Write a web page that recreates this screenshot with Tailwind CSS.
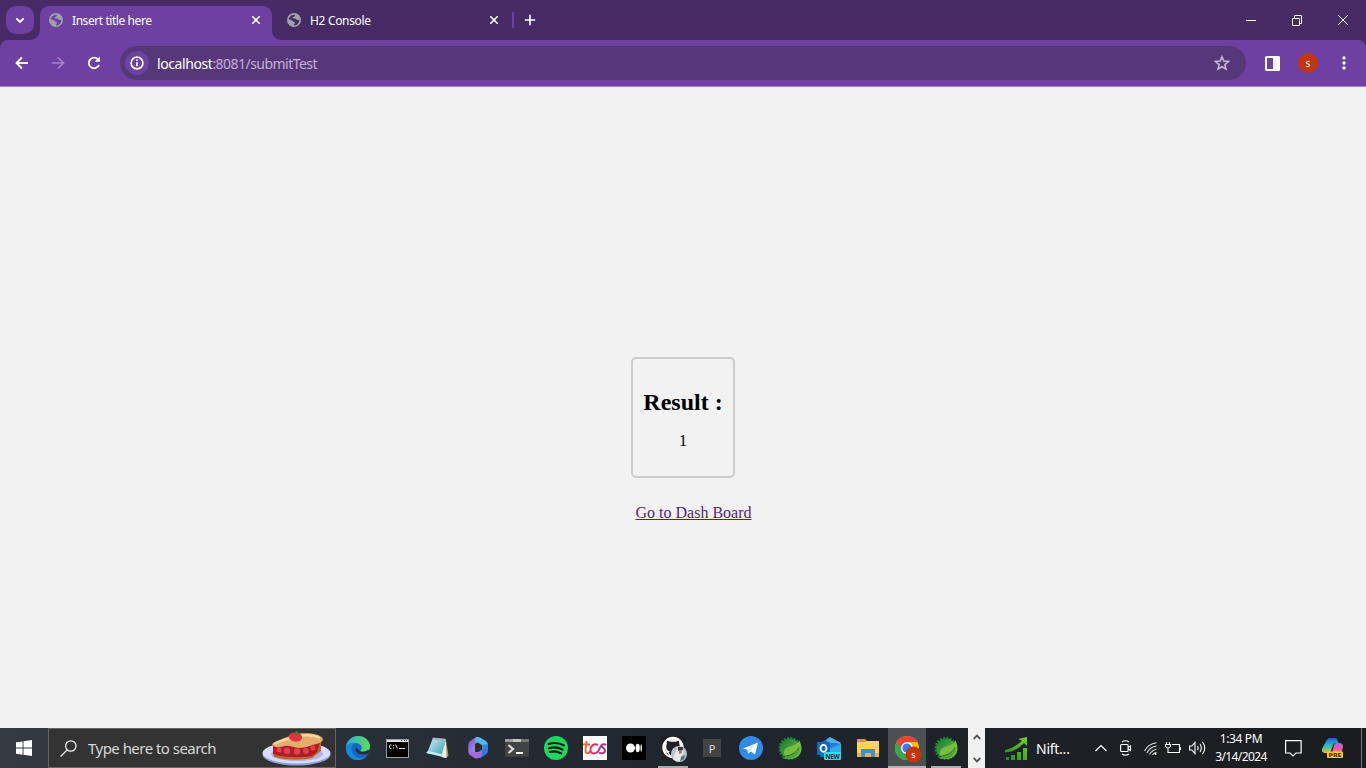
<!DOCTYPE html>
<html lang="en">
<head>
<meta charset="utf-8">
<title>Insert title here</title>
<script src="https://cdn.jsdelivr.net/npm/@tailwindcss/browser@4"></script>
</head>
<body class="w-[1366px] h-[768px] overflow-hidden flex flex-col bg-[#f2f2f2] font-['Noto_Sans','Open_Sans',sans-serif]">
<svg class="absolute w-0 h-0">
  <defs>
    <linearGradient id="leaf" x1="0" y1="0" x2="1" y2="1"><stop offset="0" stop-color="#137b35"/><stop offset="1" stop-color="#75bd3b"/></linearGradient>
    <linearGradient id="edge" x1="0" y1="0" x2="1" y2="0"><stop offset="0" stop-color="#2aabe0"/><stop offset="1" stop-color="#62dc58"/></linearGradient>
    <linearGradient id="note" x1="0" y1="0" x2="1" y2="1"><stop offset="0" stop-color="#d9f0f4"/><stop offset="1" stop-color="#2d9cb5"/></linearGradient>
    <linearGradient id="tcs" gradientUnits="userSpaceOnUse" x1="0" y1="0" x2="24" y2="0"><stop offset="0" stop-color="#ee8b22"/><stop offset=".4" stop-color="#e33060"/><stop offset="1" stop-color="#8a35bb"/></linearGradient>
    <linearGradient id="cp" x1="0" y1="0" x2="0" y2="1"><stop offset="0" stop-color="#1b62dd"/><stop offset=".5" stop-color="#28b9c7"/><stop offset="1" stop-color="#d5c923"/></linearGradient>
    <linearGradient id="cq" x1="0" y1="0" x2="0" y2="1"><stop offset="0" stop-color="#b65bea"/><stop offset=".5" stop-color="#ef5c9c"/><stop offset="1" stop-color="#f8985b"/></linearGradient>
    <linearGradient id="m1" x1="0" y1="0" x2="1" y2="1"><stop offset="0" stop-color="#7154c7"/><stop offset="1" stop-color="#cf9df0"/></linearGradient>
    <linearGradient id="m2" x1="0" y1="0" x2="1" y2="1"><stop offset="0" stop-color="#3f9be8"/><stop offset="1" stop-color="#2767cd"/></linearGradient>
    <linearGradient id="stock" gradientUnits="userSpaceOnUse" x1="0" y1="23" x2="23" y2="0"><stop offset="0" stop-color="#188d21"/><stop offset="1" stop-color="#7fd31d"/></linearGradient>
  </defs>
  <symbol id="globe" viewBox="0 0 14 14"><circle cx="7" cy="7" r="7" fill="#9ea3a8"/><path d="M8 1.700c-.3.900.2 1.400-.7 1.900-.8.500-1.600.3-1.600 1.200 0 .7.900.8 2.300.8 1.300.1 1.300 1.600 2.400 1.500.9-.1 1.200-.5 2-.4-.1 3-2.100 5.600-5.300 5.700-.4-.7.100-1.500.8-1.800.5-.4.200-1.600-.7-1.700-1.300-.1-1.400-1.500-2.500-1.700L1.600 6.100C2.100 3.600 4.800 1.600 8 1.700z" fill="currentColor"/></symbol>
  <symbol id="spring" viewBox="0 0 24 24"><circle cx="12" cy="12.500" r="10.300" fill="none" stroke="#15843a" stroke-width="2.500" stroke-dasharray="2 1.240"/><circle cx="12" cy="12.500" r="9.900" fill="url(#leaf)"/><path d="M21.500 4.500C24.500 11 24.500 19 17 22c-6 2.500-11-1-11-5C6 9 17 12 21.500 4.500z" fill="#76bd40"/><path d="M4 22C10 20 18 19 22 12c0 7-7 11.500-14 11" fill="#4fa53c"/><path d="M5 20.500c7-.5 13-3 16-9" fill="none" stroke="#1c5926" stroke-width=".9"/></symbol>
</svg>

<header class="h-10 bg-[#472a66] flex items-start text-white shrink-0">
  <button class="mt-1.5 ml-1.5 size-7 rounded-[10px] bg-[#6e40a2] flex items-center justify-center"><svg class="size-7" viewBox="0 0 28 28" fill="none" stroke="#fff" stroke-width="1.800"><path d="M10.300 12.300l3.700 3.700 3.700-3.700"/></svg></button>
  <div class="relative w-[254px] -ml-1 h-10 flex items-center pl-[19px]">
    <svg class="absolute inset-0" width="254" height="40"><path d="M0 40Q10 39 10 29V16Q10 6 20 6H232Q242 6 242 16V29Q242 40 253 40z" fill="#6e40a2"/></svg>
    <svg class="relative size-3.5 text-[#6e40a2]"><use href="#globe"/></svg>
    <span class="relative ml-[9px] pt-[2px] text-[12px] tracking-[-0.43px] w-[150px] whitespace-nowrap">Insert title here</span>
    <svg class="relative ml-[28px] size-3" viewBox="0 0 12 12" fill="none" stroke="#fff" stroke-width="1.600"><path d="M2.300 2.300l7.400 7.400M9.700 2.300l-7.400 7.400"/></svg>
  </div>
  <div class="w-[229px] h-10 flex items-center pl-[3px]">
    <svg class="size-3.5 text-[#472a66]"><use href="#globe"/></svg>
    <span class="ml-[9px] pt-[2px] text-[12px] tracking-[-0.33px] w-[150px] whitespace-nowrap">H2 Console</span>
    <svg class="ml-[28px] size-3" viewBox="0 0 12 12" fill="none" stroke="#fff" stroke-width="1.600"><path d="M2.300 2.300l7.400 7.400M9.700 2.300l-7.400 7.400"/></svg>
  </div>
  <div class="mt-3 w-0.5 h-4 bg-[#6e40a2] -ml-px"></div>
  <svg class="mt-3.5 ml-2.5 size-3" viewBox="0 0 12 12" stroke="#fff" stroke-width="1.600"><path d="M6 .8v10.400M.8 6h10.400"/></svg>
  <svg class="ml-auto mt-3.5 w-[104px] h-3 mr-[17px]" viewBox="0 0 104 12" fill="none" stroke="#fff"><path d="M1 6.500h10M47.500 4.500h7v7h-7zM49.500 4.500v-3h7v8h-2M93 1l10 10M103 1L93 11"/></svg>
</header>

<div class="h-[47px] bg-[#472a66] shrink-0">
  <nav class="h-[47px] bg-[#6e40a2] rounded-t-[8px] border-b border-[#a285c4] flex items-center text-white">
    <svg class="ml-[14px] w-4 h-4" viewBox="0 0 16 16" fill="none" stroke="#fff" stroke-width="1.900"><path d="M14 8H3M8 2.500L2.500 8 8 13.500"/></svg>
    <svg class="ml-5 w-4 h-4" viewBox="0 0 16 16" fill="none" stroke="#a583c7" stroke-width="1.700"><path d="M2 8h11M8 2.500L13.500 8 8 13.500"/></svg>
    <svg class="ml-5 w-4 h-4" viewBox="0 0 16 16" fill="none" stroke="#fff" stroke-width="1.900"><path d="M13 10A5.300 5.300 0 1 1 12 4.300L13.300 6"/><path d="M14 1.500v5.300H8.700z" fill="#fff" stroke="none"/></svg>
    <div class="ml-[18px] w-[1126px] h-[34px] rounded-full bg-[#56377a] flex items-center pl-[5px]">
      <span class="size-6 rounded-full bg-[#6e40a2] flex items-center justify-center"><svg class="size-4" viewBox="0 0 16 16" fill="none" stroke="#fff" stroke-width="1.700"><circle cx="8" cy="8" r="5.900"/><path d="M8 7.200v4M8 4.500v1.600"/></svg></span>
      <span class="ml-2 text-[14px] tracking-[-0.53px] text-[#c2afd6] whitespace-nowrap"><span class="text-white tracking-[-0.42px]">localhost</span>:8081/submitTest</span>
      <svg class="ml-auto mr-4 size-4" viewBox="0 0 16 16" fill="none" stroke="#c5b9cf" stroke-width="1.600"><path d="M8 1.800l1.800 4.300 4.700.4-3.600 3.100 1.100 4.600L8 11.800l-4 2.400 1.100-4.600L1.500 6.500l4.700-.4z"/></svg>
    </div>
    <svg class="ml-[19px] w-[15px] h-[15px]" viewBox="0 0 15 15"><path fill="#fff" fill-rule="evenodd" d="M1 0h13l1 1v13l-1 1H1l-1-1V1zM2 2v11h6V2z"/></svg>
    <span class="ml-[18px] size-5 rounded-full bg-[#c0360d] flex items-center justify-center text-[10px] leading-none pb-px">s</span>
    <svg class="ml-[24px] w-1 h-[14px]" viewBox="0 0 4 14" fill="#fff"><circle cx="2" cy="2" r="1.700"/><circle cx="2" cy="7" r="1.700"/><circle cx="2" cy="12" r="1.700"/></svg>
  </nav>
</div>

<main class="h-[641px] shrink-0 flex flex-col items-center pt-[270px] text-black font-['Liberation_Serif',serif]">
  <section class="w-[104px] h-[121px] border-2 border-[#ccc] rounded-[5px] text-center pt-[29px]">
    <h2 class="text-[24px] leading-[28px] font-bold whitespace-nowrap">Result :</h2>
    <p class="mt-[16px] text-[16px] leading-[18px]">1</p>
  </section>
  <a class="mt-[26px] ml-[21px] text-[16px] leading-[18px] text-[#551a8b] underline" href="#">Go to Dash Board</a>
</main>

<footer class="h-10 shrink-0 bg-linear-to-r from-[#333a42] via-[#20262e] to-[#1b1c20] flex items-center text-white">
  <div class="w-12 flex justify-center"><svg class="size-4" viewBox="0 0 16 16" fill="#fff"><path d="M0 2.300L6.600 1.400v6.200H0zM7.500 1.200L16 0v7.600H7.500zM0 8.500h6.600v6.200L0 13.800zM7.500 8.500H16V16l-8.500-1.200z"/></svg></div>
  <div class="w-[288px] h-10 bg-[#333] border border-[#66625f] flex items-center pl-[11px]">
    <svg class="size-[17px]" viewBox="0 0 17 17" fill="none" stroke="#eee" stroke-width="1.300"><circle cx="10.800" cy="6" r="5.200"/><path d="M7.200 9.900L.6 16.500"/></svg>
    <span class="ml-[11px] text-[15px] tracking-[-0.53px] text-[#d8d8d8] whitespace-nowrap">Type here to search</span>
    <svg class="ml-auto mr-1 w-[69px] h-[36px]" viewBox="0 0 69 36"><ellipse cx="34.500" cy="24.500" rx="34" ry="11" fill="#8f9cd8"/><ellipse cx="34.500" cy="23" rx="34" ry="10.500" fill="#d8dcfa"/><ellipse cx="35" cy="24" rx="26" ry="7" fill="#acb4e9"/><path d="M11 22l1 5c14 4 30 3 38 1l9-7V10l-6 6z" fill="#b56a2c"/><path d="M11 15v9c11 3.500 28 4 39 2l5-4 3-10z" fill="#b31a28"/><g fill="#e2404a"><circle cx="17" cy="20" r="2.500"/><circle cx="25" cy="21" r="3.200"/><circle cx="35" cy="21.500" r="3.200"/><circle cx="44" cy="21" r="3"/><circle cx="51" cy="18" r="2.500"/></g><path d="M10 14C18 9 26 7 32 4.500 42 2 57 3 60.500 8c1.500 3-2 5-6 6-6 1-10 4-17 4-6 0-10-3-15-2-4 1-11 3-12.500-2z" fill="#e5ad6b"/><path d="M12 14C20 9.500 29 8.500 36 6.500 44 4.500 52 5 58 8" stroke="#f8d6a0" stroke-width="2.500" fill="none"/><path d="M27 5c3-4 11-3 13 1 1 4-3 6-7 5.500S26 9 27 5z" fill="#e0323f"/><path d="M29 2l4 1 2-3 1 3 4-1-4 2.500z" fill="#39842c"/></svg>
  </div>
  <div class="flex h-10 pl-[2.5px] w-[632px]">
    <div class="w-[39px] shrink-0 flex items-center justify-center"><svg class="size-6" viewBox="0 0 24 24"><circle cx="12" cy="12" r="12" fill="#1268bd"/><path d="M0 11C1 4 6 0 12 0c7 0 12 5 12 10 0 4-3 6-7 6-3 0-3-1-2-2 2-3-1-7-5-7C5 7 1 9 0 11z" fill="url(#edge)"/><path d="M0 12c1-4 5-6 9-5-4 2-4 6-3 9 2 5 7 8 14 5-4 4-11 4-15 1-4-3-5-6-5-10z" fill="#168bdc"/><path d="M10 11c-2 4 2 9 12 7l2-3-2-1c-5 3-9 2-12-3z" fill="#252d35"/></svg></div>
    <div class="w-[39px] shrink-0 flex items-center justify-center"><svg class="w-[23px] h-[19px]" viewBox="0 0 23 19"><path d="M0 0h23v19H0z" fill="#9b9fa2"/><path d="M1 1h21v2H1z" fill="#dce1e4"/><path d="M1 3h21v15H1z" fill="#000"/><path d="M15 1.500h1m2 0h1m1 0h1" stroke="#345"/><path d="M5.500 6H4L3.500 7v1.500l.5 1h1.500M7.500 6v1m0 1.500v1M9.500 5.500l2 4M13 9.500h6" stroke="#ddd" fill="none"/></svg></div>
    <div class="w-[39px] ml-px shrink-0 flex items-center justify-center"><svg class="size-6" viewBox="0 0 24 24"><path d="M21 4l2.500 16-3 2-3-1z" fill="#c59a42"/><path d="M8 2l13 1-4 17-15-3z" fill="url(#note)"/><path d="M1 17l15 3.500 1-2.500L3 15z" fill="#c3edf1"/><path d="M8 1.500L21 3l-.6 2L7.300 3.500z" fill="#a8b7bd"/><path d="M20.800 4L16 21l5.500 1z" fill="#e3eff0"/></svg></div>
    <div class="w-[39px] ml-[2px] shrink-0 flex items-center justify-center"><svg class="size-[22px]" viewBox="0 0 22 22"><path d="M9 0l4 4-5 3v8l-5 3c-2-3-2-6-1.500-11.500Q2 4.500 4 3.500z" fill="url(#m1)"/><path d="M9 .2Q11-.5 13 .5l6 3.500q2 1.500 2 4v6l-6-1.500V8L9 4.500Q7 3 9 .2z" fill="#54b8ed"/><path d="M15 8l6-1v7q0 2-2 3.500l-6 4-5-4 7-5z" fill="url(#m2)"/><path d="M1.500 14.500L8 15h4l3-2v4.500q-1 3-5 4-2 0-4-1.500l-3-2Q1.500 17 1.500 14.500z" fill="#a56bdb"/></svg></div>
    <div class="w-[39px] shrink-0 flex items-center justify-center"><svg class="w-6 h-[18px]" viewBox="0 0 24 18"><rect width="24" height="18" rx="1" fill="#404244"/><path d="M0 0h8v3H0z" fill="#9b9c9e"/><path d="M8 0h8v3H8z" fill="#c4c4c5"/><path d="M16 0h8v3h-8z" fill="#747678"/><path d="M3.500 6l4.500 4-4.500 4" stroke="#ddd" stroke-width="2.200" fill="none"/><path d="M11 14h7" stroke="#fff" stroke-width="2"/></svg></div>
    <div class="w-[39px] shrink-0 flex items-center justify-center"><svg class="size-6" viewBox="0 0 24 24"><circle cx="12" cy="12" r="12" fill="#1ed760"/><path d="M4.500 8c5-1.500 11-1 15.500 1.500M5 12.200c4-1.300 9.500-.8 13.500 1.500M5.700 16c3.500-1 8-.5 11.500 1.400" fill="none" stroke="#06150b" stroke-width="2.100" stroke-linecap="round"/></svg></div>
    <div class="w-[39px] shrink-0 flex items-center justify-center"><svg class="size-6" viewBox="0 0 24 24"><path d="M0 0h24v24H0z" fill="#fff"/><path d="M3.500 5l-1 9c0 4 3 4 5 1M0 8.500h7M15 9c-3-2-7 0-7.500 4s3 6 7 3c2-1.500 2-6 5-7.500 1.500-.5 3 0 3.500.5M18.500 9.500c0 2 4 2.500 3.500 5.500-.5 2.500-4 3-6 1.500" fill="none" stroke="url(#tcs)" stroke-width="2"/></svg></div>
    <div class="w-[39px] shrink-0 flex items-center justify-center"><svg class="size-6" viewBox="0 0 24 24" fill="#fff"><path fill="#000" d="M0 0h24v24H0z"/><circle cx="8.500" cy="12" r="4.500"/><ellipse cx="15.700" cy="12" rx="2.100" ry="4.200"/><ellipse cx="19.200" cy="12" rx=".7" ry="3.800"/></svg></div>
    <div class="relative w-[39px] shrink-0 flex items-center justify-center"><svg class="size-6 overflow-visible" viewBox="0 0 24 24"><path fill="#211f24" d="M0 0h24v24H0z"/><circle cx="12" cy="11.500" r="9.700" fill="none" stroke="#fff" stroke-width="2"/><path d="M5.500 16q2 .5 2.800 2.500T11 19.500" fill="none" stroke="#fff" stroke-width="1.200"/><path d="M12 1.500a10 10 0 0 1 10 10 10 10 0 0 1-2 6l-5-1.500c3.500-1 4.500-4 3.300-8L18 4.500l-3.200 1.300H9.200L6 4.500 5.700 8c-1.200 4 0 6.500 3.300 7.500L7 17l-3-1a10 10 0 0 1 8-14.500z" fill="#fff"/><circle cx="18" cy="18" r="8" fill="#b0c5d2"/><path d="M14 17l3-5 5 1 1 4-3 3 2 5c-3 1-7 1-10-2z" fill="#ece7e5"/><path d="M17 11h5v3l-5 1z" fill="#303747"/><path d="M18 14h3v3l-3 1z" fill="#b5765b"/><path d="M20 21l4-2-1 4-4 3z" fill="#4b718a"/></svg><i class="absolute bottom-0 left-1 w-[30px] h-0.5 bg-[#a9a9aa]"></i></div>
    <div class="w-[39px] shrink-0 flex items-center justify-center"><span class="size-[18px] rounded-[1px] bg-[#434343] text-[11px] leading-[19px] text-center text-[#ddd]">P</span></div>
    <div class="w-[39px] shrink-0 flex items-center justify-center"><svg class="size-6" viewBox="0 0 24 24"><circle cx="12" cy="12" r="12" fill="#338be8"/><path d="M4 12.500L19 6.500l-3 12-4-3-3 2-.5-3.800z" fill="#fff"/><path d="M8.500 14l7-5-5 5.500-1.500 3z" fill="#b6d7f2"/></svg></div>
    <div class="w-[39px] shrink-0 flex items-center justify-center"><svg class="size-6"><use href="#spring"/></svg></div>
    <div class="w-[39px] shrink-0 flex items-center justify-center"><svg class="size-6" viewBox="0 0 24 24"><path d="M3 7l10-6 11 6v14H3z" fill="#1967b8"/><path d="M13 1l11 6-8 5-7-8z" fill="#55afe7"/><path d="M7 7h14v10H7z" fill="#247fd0"/><path d="M7 15L24 8v15H9z" fill="#31aee7"/><rect y="6" width="13" height="13" rx="1" fill="#126bc2"/><ellipse cx="6.500" cy="12.300" rx="3" ry="3.500" fill="none" stroke="#fff" stroke-width="1.800"/><rect x="7" y="16" width="17" height="8" rx="1" fill="#23e5ed"/><text x="8.300" y="22.500" font-size="6.500" font-weight="700" textLength="14.500" font-family="Noto Sans" fill="#062f35">NEW</text></svg></div>
    <div class="w-[39px] shrink-0 flex items-center justify-center"><svg class="w-[22px] h-[19px]" viewBox="0 0 22 19"><path d="M0 0h8l2 2v3H0z" fill="#d99b12"/><path d="M0 3h8l2-1h12v16H0z" fill="#ffd45a"/><path d="M0 14h22v4H0z" fill="#eab43b"/><path d="M4 10h14v8h-4v-4H8v4H4z" fill="#3d91cf"/></svg></div>
    <div class="relative w-[38px] ml-[0.5px] shrink-0 bg-[#4c4f54] flex items-center justify-center"><svg class="size-[25px] overflow-visible" viewBox="0 0 25 25"><circle cx="12" cy="12" r="12" fill="#fbbc04"/><path d="M1.600 6a12 12 0 0 1 20.800 0H12v6l-5 3z" fill="#ea4335"/><path d="M1.600 6A12 12 0 0 0 12 24l5-9-10 0z" fill="#34a853"/><circle cx="12" cy="12" r="6" fill="#fff"/><circle cx="12" cy="12" r="4.600" fill="#367be8"/><circle cx="18.500" cy="18.500" r="8" fill="#c0360d"/><text x="18.500" y="21.500" text-anchor="middle" font-size="9" font-family="Noto Sans" fill="#fff">s</text></svg><i class="absolute bottom-0 left-0 w-full h-0.5 bg-[#b3b4b6]"></i></div>
    <div class="relative w-[39px] shrink-0 flex items-center justify-center"><svg class="size-6"><use href="#spring"/></svg><i class="absolute bottom-0 left-[5px] w-[30px] h-0.5 bg-[#adaeb0]"></i></div>
  </div>
  <div class="w-[17px] h-10 bg-[#f1f1f1] flex flex-col justify-between items-center pt-1.5 pb-[5px]"><svg class="w-2 h-1.5" viewBox="0 0 8 6" fill="none" stroke="#555" stroke-width="1.800"><path d="M.7 5L4 1.600 7.300 5"/></svg><svg class="w-2 h-1.5" viewBox="0 0 8 6" fill="none" stroke="#555" stroke-width="1.800"><path d="M.7 1L4 4.400 7.300 1"/></svg></div>
  <svg class="ml-5 w-[23px] h-[23px]" viewBox="0 0 23 23" fill="url(#stock)"><path d="M0 13C7 12 12 8 17 4L13 2 22 0v9l-3-3C13 12 7 15 0 15.500zM1 20h3v3H1zM6 18h4v5H6zM12 15h4v8h-4zM18 11h4v12h-4z"/></svg>
  <span class="ml-2 w-[36px] text-[14px] tracking-[-0.25px] whitespace-nowrap">Nift...</span>
  <svg class="ml-[23px] w-3 h-2" viewBox="0 0 12 8" fill="none" stroke="#fff" stroke-width="1.200"><path d="M.5 7L6 1.500 11.500 7"/></svg>
  <svg class="ml-[13px] w-3 h-4" viewBox="0 0 12 16" fill="none" stroke="#fff" stroke-width="1.100"><rect x=".6" y="4.500" width="7.500" height="7" rx="1"/><path d="M8 7.500l2.500-1.500v4.500L8 9M2 2q3.500-2.500 7 0M2 14q3.500 2.500 7 0"/></svg>
  <svg class="ml-3 size-[13px]" viewBox="0 0 13 13" fill="none" stroke="#ddd" stroke-width="1.100"><path d="M.5 9Q4 2 12.500.8M2.800 11Q6 5 12.500 4M5.500 12.500Q8 8 12.500 7.200M8.500 12.800Q10 10.500 12.500 10.200"/><circle cx="11.500" cy="12" r="1" fill="#fff" stroke="none"/></svg>
  <svg class="ml-2 w-4 h-3" viewBox="0 0 16 12" fill="none" stroke="#fff" stroke-width="1.100"><path d="M7 2.500h7.500v8H5.500M15.500 5v3M1.500 0v2M4.500 0v2M.5 2.500h5v2q-2.500 3-5 0zM3 6v4.500h3"/></svg>
  <svg class="ml-2 w-[17px] h-[14px]" viewBox="0 0 17 14" fill="none" stroke="#fff" stroke-width="1.100"><path d="M.6 5h2.200L6 1.500v11L2.800 9H.6zM8.500 5q1.300 2 0 4M11 3q2.700 4 0 8M13.500 1q4.500 6 0 12"/></svg>
  <div class="ml-[7px] mr-px w-[56px] flex flex-col items-center text-[12px] leading-[18px] whitespace-nowrap pb-px"><span class="tracking-[-0.35px]">1:34 PM</span><span class="tracking-[-0.6px]">3/14/2024</span></div>
  <svg class="ml-[15px] w-[17px] h-[17px]" viewBox="0 0 17 17" fill="none" stroke="#fff" stroke-width="1.200"><path d="M.6 .6h15.500v12.400H11L8 16l-3-3H.6z"/></svg>
  <svg class="ml-[20px] w-[21px] h-5" viewBox="0 0 21 20"><path d="M5 1.500Q6 0 8 0h5q2 0 2.500 2l1 3h-3q-2 0-2.500 2l-2 6q-.6 2-3 2H3q-4 0-3-4z" fill="url(#cp)"/><path d="M12 7q.6-2 2.500-2h3q3 0 3.500 3l-1 6q-1 3-3 3h-6q-2 0-3-2h2z" fill="url(#cq)"/><rect x="5" y="13.500" width="16" height="6.500" rx="1" fill="#fac928"/><text x="6.500" y="19" font-family="Noto Sans" font-weight="700" font-size="6" textLength="13" lengthAdjust="spacingAndGlyphs" fill="#332700">PRE</text></svg>
  <i class="ml-auto mr-[4px] w-px h-10 bg-[#73777b]"></i>
</footer>
</body>
</html>
